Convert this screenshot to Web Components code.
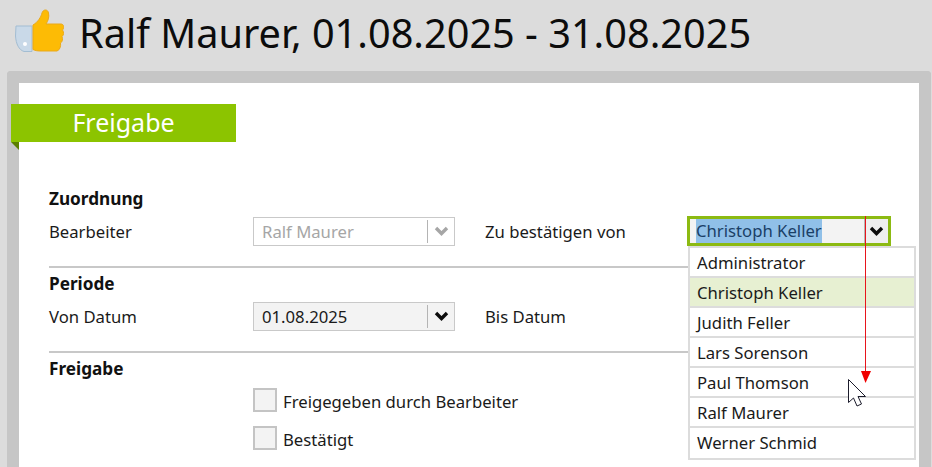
<!DOCTYPE html>
<html>
<head>
<meta charset="utf-8">
<style>
  html, body { margin: 0; height: 467px; overflow: hidden; background: #dcdcdc; }
  body { font-family: "Noto Sans", "Open Sans", sans-serif; color: #1a1a1a; }
</style>
</head>
<body>
<app-header>Ralf Maurer, 01.08.2025 - 31.08.2025</app-header>
<app-panel>
  <form-ribbon slot="ribbon">Freigabe</form-ribbon>
  <form-section heading="Zuordnung">
    <span>Bearbeiter</span>
    <select-field value="Ralf Maurer" disabled></select-field>
    <span class="gap">Zu bestätigen von</span>
    <select-field value="Christoph Keller" focused></select-field>
  </form-section>
  <form-section heading="Periode">
    <span>Von Datum</span>
    <select-field value="01.08.2025"></select-field>
    <span class="gap">Bis Datum</span>
    <select-field></select-field>
  </form-section>
  <form-section heading="Freigabe" last>
    <check-row>Freigegeben durch Bearbeiter</check-row>
    <check-row>Bestätigt</check-row>
  </form-section>
</app-panel>
<drop-list selected="Christoph Keller" items="Administrator|Christoph Keller|Judith Feller|Lars Sorenson|Paul Thomson|Ralf Maurer|Werner Schmid"></drop-list>
<drag-hint></drag-hint>

<script>
class AppHeader extends HTMLElement {
  constructor() {
    super();
    this.attachShadow({ mode: "open" });
    this.shadowRoot.innerHTML = `
      <style>
        :host { display: flex; align-items: center; height: 71px; box-sizing: border-box; padding-left: 15px; background: #dcdcdc; }
        svg { width: 49px; height: 44px; margin-right: 15px; margin-top: -9px; flex: none; }
        h1 { margin: 0; font: 400 39.7px "Noto Sans", sans-serif; color: #0c0c0c; white-space: nowrap; margin-top: -6px; }
      </style>
      <svg viewBox="0 0 49 44">
        <path d="M1 17 H17 V42.5 H9 C4 41 1 35 0.5 27 Z" fill="#c9d9e8" stroke="#a3bdd2" stroke-width="1"/>
        <circle cx="10" cy="35" r="2" fill="#fff"/>
        <path d="M18 16 C23 13 26 8 27 4 C28 0 33 0 33.5 4 C34.5 8 33 12 31 15 H46 C49 15 49.5 19 47.5 21 C49 23 49 26 47 27.5 C48 30 47.5 33 45.5 34 C46 37 45 41 42 42 H26 C22 42 20 41.5 18 40.5 Z" fill="#fdbb05" stroke="#eaa91a" stroke-width="1"/>
      </svg>
      <h1><slot></slot></h1>`;
  }
}

class AppPanel extends HTMLElement {
  constructor() {
    super();
    this.attachShadow({ mode: "open" });
    this.shadowRoot.innerHTML = `
      <style>
        :host { display: block; margin-left: 7px; margin-right: 1px; height: 396px; box-sizing: border-box;
                border: solid #c6c6c6; border-width: 12px 12px 0; border-radius: 4px 4px 0 0; background: #fff; position: relative; }
        .body { padding: 100px 12px 0 30px; }
      </style>
      <slot name="ribbon"></slot>
      <div class="body"><slot></slot></div>`;
  }
}

class FormRibbon extends HTMLElement {
  constructor() {
    super();
    this.attachShadow({ mode: "open" });
    this.shadowRoot.innerHTML = `
      <style>
        :host { display: block; position: absolute; left: -8px; top: 21px; width: 225px; height: 38px; background: #8cc400;
                color: #fff; font: 400 25px/38px "Noto Sans", sans-serif; text-align: center; }
        .fold { position: absolute; left: 0; top: 38px; width: 0; height: 0; border-top: 8px solid #5b7f00; border-left: 8px solid transparent; }
        span { position: relative; top: -1px; }
      </style>
      <span><slot></slot></span><div class="fold"></div>`;
  }
}

class FormSection extends HTMLElement {
  constructor() {
    super();
    this.attachShadow({ mode: "open" });
    const last = this.hasAttribute("last");
    this.shadowRoot.innerHTML = `
      <style>
        :host { display: block; height: 85px; box-sizing: border-box; padding-top: 5px; font: 400 16.7px "Noto Sans", sans-serif; color: #1a1a1a;
                ${last ? "" : "border-bottom: 2px solid #c8c8c8;"} }
        h3 { margin: 0; font: 700 17.2px/22px "Noto Sans", sans-serif; color: #111; height: 20px; }
        .row { display: grid; grid-template-columns: 204px 202px 233px 202px; align-items: center; height: 30px; margin-top: 8px; }
        :host([last]) .row { display: block; margin: 10px 0 0 204px; height: auto; }
        ::slotted(.gap) { padding-left: 30px; }
      </style>
      <h3>${this.getAttribute("heading")}</h3>
      <div class="row"><slot></slot></div>`;
  }
}

class SelectField extends HTMLElement {
  constructor() {
    super();
    this.attachShadow({ mode: "open" });
    const value = this.getAttribute("value") || "";
    const selected = this.hasAttribute("focused");
    const disabled = this.hasAttribute("disabled");
    this.shadowRoot.innerHTML = `
      <style>
        :host { display: flex; height: 29px; box-sizing: border-box; border: 1px solid #c9c9c9; background: #f3f3f3; color: #1a1a1a; align-items: stretch; }
        :host([disabled]) { background: #fff; color: #a6a6a6; }
        :host([focused]) { border: 3px solid #8cba12; margin: 0 -1px; height: 30px; }
        .text { flex: 1; padding-left: 8px; line-height: 27px; white-space: nowrap; overflow: hidden; }
        :host([focused]) .text { padding-left: 6px; line-height: 24px; }
        mark { display: inline-block; background: #90c0e8; color: #1a3f66; }
        .btn { flex: none; width: 27px; display: flex; align-items: center; justify-content: center; position: relative; }
        .btn::before { content: ""; position: absolute; left: 0; top: 2px; bottom: 2px; width: 1px; background: #b4b4b4; }
        :host([focused]) .btn { width: 24px; background: #efefef; }
        :host([focused]) .btn::before { top: 0; bottom: 0; width: 2px; }
        svg { width: 15px; height: 11px; margin-left: 1px; }
      </style>
      <div class="text">${selected ? `<mark>${value}</mark>` : value}</div>
      <div class="btn"><svg viewBox="0 0 15 11"><path d="M2 2 L7.5 7.5 L13 2" fill="none" stroke="${disabled ? "#a6a6a6" : "#0c0c0c"}" stroke-width="3.4"/></svg></div>`;
  }
}

class CheckRow extends HTMLElement {
  constructor() {
    super();
    this.attachShadow({ mode: "open" });
    this.shadowRoot.innerHTML = `
      <style>
        :host { display: flex; align-items: center; height: 24px; margin-bottom: 14px; }
        .box { width: 24px; height: 24px; box-sizing: border-box; border: 2px solid #c4c4c4; background: #f3f3f3; margin-right: 6px; flex: none; }
        span { position: relative; top: 1px; }
      </style>
      <div class="box"></div><span><slot></slot></span>`;
  }
}

class DropList extends HTMLElement {
  constructor() {
    super();
    this.attachShadow({ mode: "open" });
    const selected = this.getAttribute("selected");
    const rows = this.getAttribute("items").split("|")
      .map((t) => `<div class="item${t === selected ? " sel" : ""}">${t}</div>`).join("");
    this.shadowRoot.innerHTML = `
      <style>
        :host { display: block; position: absolute; left: 688px; top: 246px; width: 228px; box-sizing: border-box; border: 2px solid #dcdcdc;
                background: #fff; font: 400 16.7px "Noto Sans", sans-serif; color: #1a1a1a; }
        .item { height: 30px; box-sizing: border-box; line-height: 29px; padding-left: 7px; border-bottom: 2px solid #dcdcdc; }
        .item:last-child { border-bottom: 0; }
        .sel { background: #e7f0d2; }
      </style>
      ${rows}`;
  }
}

class DragHint extends HTMLElement {
  constructor() {
    super();
    this.attachShadow({ mode: "open" });
    this.shadowRoot.innerHTML = `
      <style>
        :host { display: block; position: absolute; left: 0; top: 0; width: 932px; height: 467px; pointer-events: none; }
        svg { position: absolute; left: 0; top: 0; }
      </style>
      <svg width="932" height="467" viewBox="0 0 932 467">
        <path d="M865.5 216 V373" stroke="#e8141c" stroke-width="1" fill="none"/>
        <path d="M861 371 H871 L865.5 383 Z" fill="#f00000"/>
        <path d="M848.5 379.5 V402.5 L853.5 398 L857 406 L861.5 404 L858 396.5 L865.5 396.5 Z" fill="#fff" stroke="#1c1c2c" stroke-width="1"/>
      </svg>`;
  }
}

customElements.define("app-header", AppHeader);
customElements.define("app-panel", AppPanel);
customElements.define("form-ribbon", FormRibbon);
customElements.define("form-section", FormSection);
customElements.define("select-field", SelectField);
customElements.define("check-row", CheckRow);
customElements.define("drop-list", DropList);
customElements.define("drag-hint", DragHint);
</script>
</body>
</html>
